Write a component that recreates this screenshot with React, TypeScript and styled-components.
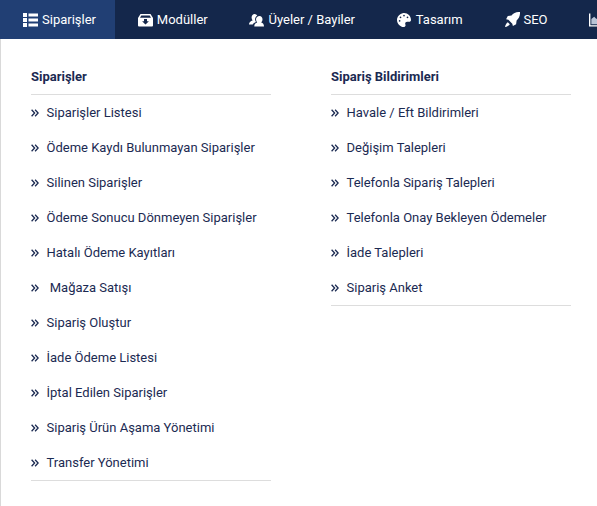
import React from "react";
import styled, { createGlobalStyle } from "styled-components";
import { FaPalette } from "react-icons/fa";

const ListIcon = () => (
  <svg width="15" height="14" viewBox="0 0 15 14" fill="#fff">
    <path d="M0 0h4v4H0zM0 5h4v4H0zM0 10h4v4H0zM5.500 .5H15v3H5.500zM5.500 5.500H15v3H5.500zM5.500 10.500H15v3H5.500z" />
  </svg>
);

const ModuleIcon = () => (
  <svg width="15" height="14" viewBox="0 0 15 14">
    <path fill="#fff" d="M2.500 1h10L15 5v7.500a1 1 0 0 1-1 1H1a1 1 0 0 1-1-1V5z" />
    <path fill="#14274b" d="M3.300 2.400h8.400l1.300 2.300H2z" />
    <path fill="#14274b" d="M6 6h3v2.300h1.900L7.500 11.500 4.100 8.300H6z" />
  </svg>
);

const UsersIcon = () => (
  <svg width="15" height="14" viewBox="0 0 15 14" fill="#fff">
    <path d="M5.600 1a3 3 0 0 1 2.700 1.700C6.700 3.400 5.900 5 6.100 6.800c.1.900.4 1.600.9 2.100-1.300.5-2.900 1.300-3.300 2.600H0c0-2.300 1.500-3.300 3.600-4C2.900 6.700 2.500 5.500 2.600 4.200 2.700 2.300 3.900 1 5.600 1z" />
    <path d="M10.500 3c1.800 0 3 1.400 3 3.300 0 1.300-.5 2.400-1.300 3.200C13.900 10 15 11 15 13.500H5.300c0-2.500 1.200-3.500 2.900-4-.8-.8-1.200-1.900-1.200-3.200C7 4.400 8.700 3 10.500 3z" />
  </svg>
);

const RocketIcon = () => (
  <svg width="15" height="15" viewBox="0 0 15 15" fill="#fff">
    <path d="M15 0c.2 3.600-1 6.400-3.400 8.600l-.5 3.700L7.900 14l-.6-2.300-3.900-3.900-2.300-.6 1.700-3.200 3.700-.5C8.600 1 11.400-.2 15 0z" />
    <path d="M2.800 10.200l2 2C4 13.600 2 14.600 0 15c.4-2 1.400-4 2.800-4.800z" />
  </svg>
);

const AreaChartIcon = () => (
  <svg width="16" height="14" viewBox="0 0 16 14">
    <path fill="#b9c3d6" d="M2.500 11.500V6l3-2.500L8 6l3-3 4 4v4.500z" />
    <path fill="#fff" d="M0 0h1.500v12.500H16V14H0z" />
  </svg>
);

const Chevron = () => (
  <svg width="8" height="8" viewBox="0 0 8 8" fill="none" stroke="#1b2a52" strokeWidth="1.300">
    <path d="M.6.800 3.600 4 .6 7.200M4.100.800 7.100 4 4.100 7.200" />
  </svg>
);

const navItems = [
  { label: "Siparişler", icon: <ListIcon />, active: true },
  { label: "Modüller", icon: <ModuleIcon /> },
  { label: "Üyeler / Bayiler", icon: <UsersIcon /> },
  { label: "Tasarım", icon: <FaPalette /> },
  { label: "SEO", icon: <RocketIcon /> },
  { label: "", icon: <AreaChartIcon /> },
];

const columns = [
  {
    title: "Siparişler",
    links: [
      "Siparişler Listesi",
      "Ödeme Kaydı Bulunmayan Siparişler",
      "Silinen Siparişler",
      "Ödeme Sonucu Dönmeyen Siparişler",
      "Hatalı Ödeme Kayıtları",
      "\u00a0Mağaza Satışı",
      "Sipariş Oluştur",
      "İade Ödeme Listesi",
      "İptal Edilen Siparişler",
      "Sipariş Ürün Aşama Yönetimi",
      "Transfer Yönetimi",
    ],
  },
  {
    title: "Sipariş Bildirimleri",
    links: [
      "Havale / Eft Bildirimleri",
      "Değişim Talepleri",
      "Telefonla Sipariş Talepleri",
      "Telefonla Onay Bekleyen Ödemeler",
      "İade Talepleri",
      "Sipariş Anket",
    ],
  },
];

const App: React.FunctionComponent = () => {
  return (
    <Root>
      <GlobalStyle />
      <Nav>
        {navItems.map(({ label, icon, active }) => (
          <NavItem key={label} $active={active}>
            <NavIcon>{icon}</NavIcon>
            {label}
          </NavItem>
        ))}
      </Nav>
      <Panel>
        {columns.map(({ title, links }) => (
          <Column key={title}>
            <Title>{title}</Title>
            <Links>
              {links.map((link) => (
                <LinkRow key={link}>
                  <ChevronBox><Chevron /></ChevronBox>
                  <LinkText>{link}</LinkText>
                </LinkRow>
              ))}
            </Links>
          </Column>
        ))}
      </Panel>
    </Root>
  );
};

export default App;

const GlobalStyle = createGlobalStyle`
  html, body {
    margin: 0;
    background: #fff;
  }
`;

const Root = styled.div`
  display: flex;
  flex-direction: column;
  width: 597px;
  height: 506px;
  overflow: hidden;
  font-family: Roboto, "Liberation Sans", sans-serif;
  font-size: 13px;
  color: #1b2a52;
`;

const Nav = styled.nav`
  display: flex;
  flex: none;
  height: 39px;
  background: #14274b;
  white-space: nowrap;
`;

const NavItem = styled.a<{ $active?: boolean }>`
  display: flex;
  flex: none;
  align-items: center;
  padding: 0 18.800px 0 23px;
  color: #fff;
  font-size: 13px;
  background: ${(p) => (p.$active ? "#213f74" : "transparent")};
`;

const NavIcon = styled.span`
  display: flex;
  width: 15px;
  margin-right: 4px;
  font-size: 14px;
  justify-content: center;
`;

const Panel = styled.div`
  display: flex;
  flex: 1;
  gap: 60px;
  align-items: flex-start;
  padding: 29px 0 0 30px;
  border-left: 1px solid #d9d9d9;
`;

const Column = styled.section`
  width: 240px;
  border-bottom: 1px solid #dddddd;
`;

const Title = styled.h4`
  margin: 0;
  height: 26px;
  line-height: 18px;
  font-size: 13px;
  font-weight: 700;
  border-bottom: 1px solid #dddddd;
`;

const Links = styled.ul`
  margin: 0;
  padding: 0;
  list-style: none;
`;

const LinkRow = styled.li`
  display: flex;
  align-items: center;
  height: 35px;
`;

const ChevronBox = styled.span`
  display: flex;
  width: 15.500px;
`;

const LinkText = styled.span`
  white-space: pre;
`;
